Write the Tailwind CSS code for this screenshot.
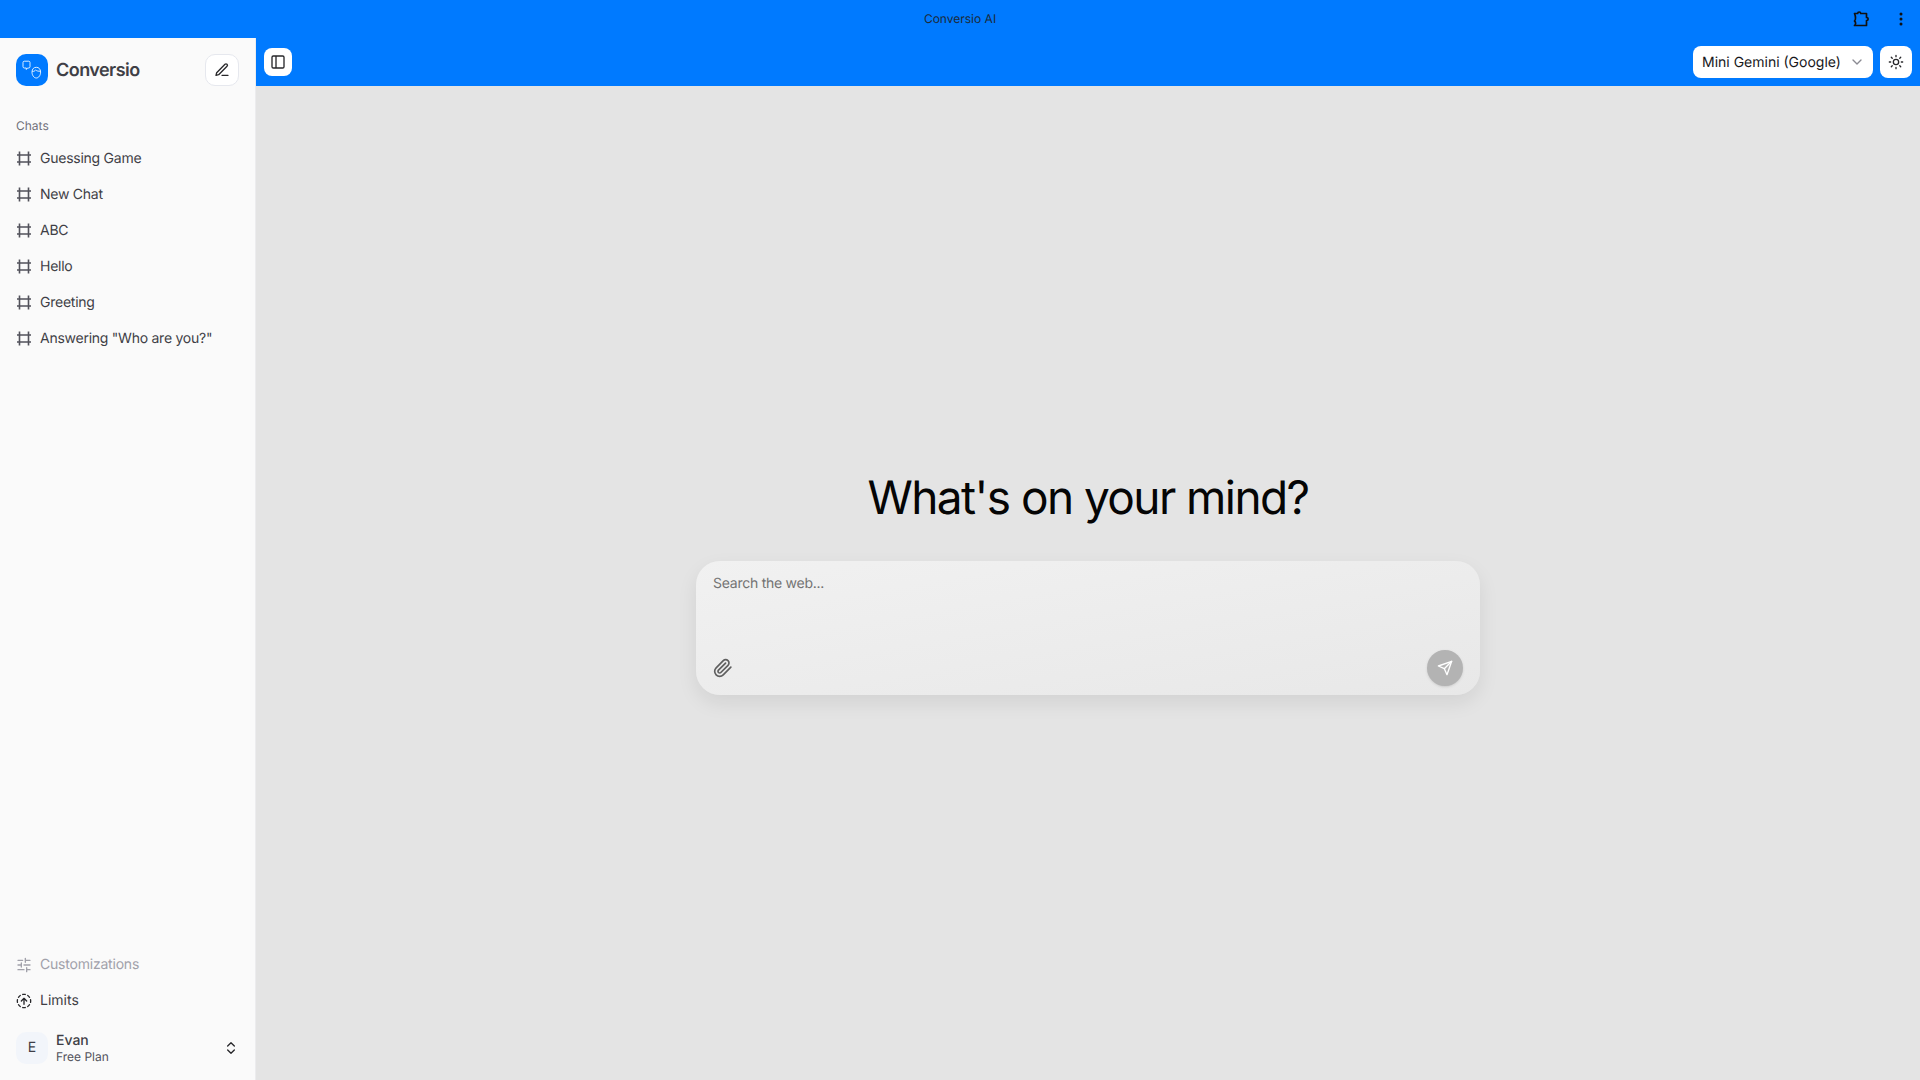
<!DOCTYPE html>
<html lang="en">
<head>
    <meta charset="UTF-8">
    <meta name="viewport" content="width=device-width, initial-scale=1.0">
    <title>Conversio AI</title>
    <script src="https://cdn.jsdelivr.net/npm/@tailwindcss/browser@4"></script>
</head>
<body class="h-screen w-screen overflow-hidden bg-[#007aff] font-['Inter',sans-serif] [text-rendering:geometricPrecision] antialiased flex flex-col">

<!-- window title bar -->
<div class="h-[38px] shrink-0 relative flex items-center justify-center">
    <span class="text-xs text-[#1c2a3a]">Conversio AI</span>
    <div class="absolute right-0 top-0 h-[38px] flex items-center">
        <svg class="w-[17px] h-[16px] mr-[29px] text-[#111]" viewBox="0 0 17 16" fill="none" stroke="currentColor" stroke-width="1.700" stroke-linejoin="round"><path d="M1.500 2.500h3.200c0-2 3-2 3 0h5.800v4c2.200 0 2.200 3 0 3v5H1.500c1.500-1 1.500-3.500 0-4.500 1.500-.8 1.200-5 0-7.500z"/></svg>
        <svg class="w-[4px] h-[14px] mr-[17px] text-[#111]" viewBox="0 0 4 14" fill="currentColor"><circle cx="2" cy="2" r="1.500"/><circle cx="2" cy="7" r="1.500"/><circle cx="2" cy="12" r="1.500"/></svg>
    </div>
</div>

<div class="flex-1 flex min-h-0">
    <!-- sidebar -->
    <aside class="w-[256px] shrink-0 bg-[#fafafa] border-r border-[#ececee] flex flex-col px-4">
        <div class="flex items-center justify-between mt-4">
            <div class="flex items-center gap-2">
                <div class="w-8 h-8 rounded-[10px] bg-[#007aff] flex items-center justify-center">
                    <svg class="w-[22px] h-[22px] text-white/85" viewBox="0 0 22 22" fill="none" stroke="currentColor" stroke-width="1" stroke-linejoin="round"><path d="M2 3.500c0-.8.5-1.300 1.300-1.300h4.400c.8 0 1.300.5 1.300 1.300v4.200c0 .8-.5 1.300-1.300 1.300H6.500L5.300 10.500V9H3.300C2.500 9 2 8.500 2 7.700z"/><path d="M11 13c0-3 1.800-4.700 4.300-4.700S19.600 10 19.600 13c0 3.400-2 6-4.300 6S11 16.400 11 13z"/><path d="M11.200 12.300c2 .4 2.800-.6 3.400-1.400.9 1 2.800 1.500 4.900 1.300"/></svg>
                </div>
                <span class="text-lg font-semibold text-[#3f3f46] tracking-[-0.03em] pt-[1px]">Conversio</span>
            </div>
            <button class="w-[34px] h-8 rounded-[10px] bg-white border border-[#e6e8ee] flex items-center justify-center">
                <svg class="w-4 h-4 text-[#27272a]" viewBox="0 0 24 24" fill="none" stroke="currentColor" stroke-width="2" stroke-linecap="round" stroke-linejoin="round"><path d="M12 20h9"/><path d="M16.500 3.500a2.120 2.120 0 0 1 3 3L7 19l-4 1 1-4z"/></svg>
            </button>
        </div>

        <div class="text-xs text-[#71717a] mt-[32px] h-4 leading-4">Chats</div>
        <ul class="mt-[7px] text-sm text-[#3f3f46] tracking-[-0.018em]">
            <li class="h-9 flex items-center gap-2"><svg class="w-4 h-4 text-[#52525b]" viewBox="0 0 16 16" fill="none" stroke="currentColor" stroke-width="1.600"><path d="M1 4h14M1 11h14M3.500 .5v14M12.500 .5v14"/></svg>Guessing Game</li>
            <li class="h-9 flex items-center gap-2"><svg class="w-4 h-4 text-[#52525b]" viewBox="0 0 16 16" fill="none" stroke="currentColor" stroke-width="1.600"><path d="M1 4h14M1 11h14M3.500 .5v14M12.500 .5v14"/></svg>New Chat</li>
            <li class="h-9 flex items-center gap-2"><svg class="w-4 h-4 text-[#52525b]" viewBox="0 0 16 16" fill="none" stroke="currentColor" stroke-width="1.600"><path d="M1 4h14M1 11h14M3.500 .5v14M12.500 .5v14"/></svg>ABC</li>
            <li class="h-9 flex items-center gap-2"><svg class="w-4 h-4 text-[#52525b]" viewBox="0 0 16 16" fill="none" stroke="currentColor" stroke-width="1.600"><path d="M1 4h14M1 11h14M3.500 .5v14M12.500 .5v14"/></svg>Hello</li>
            <li class="h-9 flex items-center gap-2"><svg class="w-4 h-4 text-[#52525b]" viewBox="0 0 16 16" fill="none" stroke="currentColor" stroke-width="1.600"><path d="M1 4h14M1 11h14M3.500 .5v14M12.500 .5v14"/></svg>Greeting</li>
            <li class="h-9 flex items-center gap-2"><svg class="w-4 h-4 text-[#52525b]" viewBox="0 0 16 16" fill="none" stroke="currentColor" stroke-width="1.600"><path d="M1 4h14M1 11h14M3.500 .5v14M12.500 .5v14"/></svg>Answering "Who are you?"</li>
        </ul>

        <div class="mt-auto text-sm">
            <div class="h-9 flex items-center gap-2 text-[#a1a1aa] tracking-[-0.015em]">
                <svg class="w-4 h-4" viewBox="0 0 24 24" fill="none" stroke="currentColor" stroke-width="2" stroke-linecap="round"><path d="M21 5h-7M10 5H3M21 12h-9M8 12H3M21 19h-5M12 19H3M14 2v6M8 9v6M16 16v6"/></svg>
                Customizations
            </div>
            <div class="h-9 flex items-center gap-2 text-[#3f3f46]">
                <svg class="w-4 h-4 text-[#27272a]" viewBox="0 0 24 24" fill="none" stroke="currentColor" stroke-width="2" stroke-linecap="round" stroke-linejoin="round"><path d="M10.100 2.180a9.900 9.900 0 0 1 3.800 0M17.600 3.700a10 10 0 0 1 2.700 2.700M21.820 10.100a9.900 9.900 0 0 1 0 3.800M20.300 17.600a10 10 0 0 1-2.700 2.700M13.900 21.820a9.900 9.900 0 0 1-3.800 0M6.400 20.300a10 10 0 0 1-2.700-2.700M2.180 13.900a9.900 9.900 0 0 1 0-3.800M3.700 6.400a10 10 0 0 1 2.700-2.700"/><path d="M12 17V8M8 12l4-4 4 4"/></svg>
                Limits
            </div>
            <div class="h-8 flex items-center gap-2 mt-[13px] mb-[16px]">
                <div class="w-8 h-8 rounded-[10px] bg-[#f2f5fa] flex items-center justify-center text-sm text-[#3f3f46]">E</div>
                <div class="flex-1 leading-none pt-[2px]">
                    <div class="text-sm font-medium text-[#3f3f46] leading-4">Evan</div>
                    <div class="text-xs text-[#52525b] leading-4">Free Plan</div>
                </div>
                <svg class="w-4 h-4 text-[#27272a]" viewBox="0 0 24 24" fill="none" stroke="currentColor" stroke-width="2" stroke-linecap="round" stroke-linejoin="round"><path d="m7 15 5 5 5-5M7 9l5-5 5 5"/></svg>
            </div>
        </div>
    </aside>

    <div class="flex-1 flex flex-col min-w-0">
        <!-- header -->
        <header class="h-[48px] shrink-0 flex items-start justify-between pt-2 pl-2 pr-2">
            <button class="w-7 h-7 mt-[2px] rounded-lg bg-white flex items-center justify-center">
                <svg class="w-4 h-4 text-[#27272a]" viewBox="0 0 24 24" fill="none" stroke="currentColor" stroke-width="2" stroke-linejoin="round"><rect x="3" y="3" width="18" height="18" rx="2"/><path d="M9 3v18"/></svg>
            </button>
            <div class="flex items-center gap-[7px]">
                <div class="w-[180px] h-8 rounded-lg bg-white flex items-center justify-between pl-[9px] pr-2 text-sm text-[#18181b]">
                    <span class="pt-[1px]">Mini Gemini (Google)</span>
                    <svg class="w-4 h-4 text-[#8a8a92]" viewBox="0 0 24 24" fill="none" stroke="currentColor" stroke-width="2" stroke-linecap="round" stroke-linejoin="round"><path d="m6 9 6 6 6-6"/></svg>
                </div>
                <button class="w-8 h-8 rounded-lg bg-white flex items-center justify-center">
                    <svg class="w-4 h-4 text-[#27272a]" viewBox="0 0 24 24" fill="none" stroke="currentColor" stroke-width="2" stroke-linecap="round"><circle cx="12" cy="12" r="4"/><path d="M12 2v2M12 20v2M4.930 4.930l1.410 1.410M17.660 17.660l1.410 1.410M2 12h2M20 12h2M6.340 17.660l-1.410 1.410M19.070 4.930l-1.410 1.410"/></svg>
                </button>
            </div>
        </header>

        <!-- main -->
        <main class="flex-1 bg-[#e4e4e4] flex flex-col items-center justify-center pt-[1px]">
            <h1 class="text-[46px] leading-[52px] [font-weight:370] text-[#050505] text-center tracking-[-0.034em]">What's on your mind?</h1>
            <div class="w-[784px] h-[134px] mt-[37px] rounded-3xl bg-gradient-to-br from-[#f1f1f1] to-[#e8e8e8] shadow-[0_8px_20px_rgba(0,0,0,0.08)] flex flex-col justify-between pl-[17px] pr-[17px] pt-[13px] pb-[9px]">
                <div class="text-sm text-[#737373] leading-5 tracking-[-0.018em]">Search the web...</div>
                <div class="flex items-center justify-between">
                    <svg class="w-[20px] h-[20px] text-[#5f5f5f]" viewBox="0 0 24 24" fill="none" stroke="currentColor" stroke-width="2" stroke-linecap="round" stroke-linejoin="round"><path d="m21.440 11.050-9.190 9.190a6 6 0 0 1-8.490-8.490l8.570-8.570A4 4 0 1 1 18 8.840l-8.590 8.570a2 2 0 0 1-2.830-2.830l8.490-8.480"/></svg>
                    <button class="w-9 h-9 rounded-full bg-[#b3b3b3] flex items-center justify-center shadow-sm">
                        <svg class="w-4 h-4 text-white" viewBox="0 0 24 24" fill="none" stroke="currentColor" stroke-width="2" stroke-linecap="round" stroke-linejoin="round"><path d="M22 2 15 22l-4-9-9-4z"/><path d="M22 2 11 13"/></svg>
                    </button>
                </div>
            </div>
        </main>
    </div>
</div>
</body>
</html>
